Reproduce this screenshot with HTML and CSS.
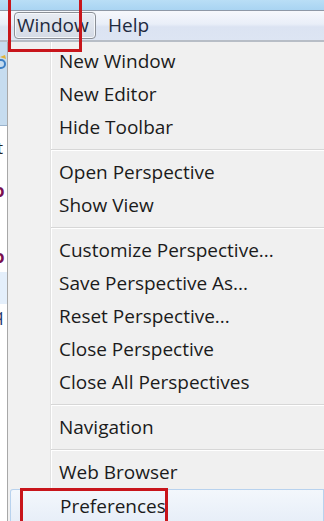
FILE: index.html
```html
<!DOCTYPE html>
<html>
<head>
    <title>Window menu</title>
    <meta name="viewport" content="width=device-width, initial-scale=1" />
    <link rel="stylesheet" href="styles.css">
</head>
<body>
    <div class="titlebar"></div>
    <div class="menubar">
        <div class="menubar-item active">Window</div>
        <div class="menubar-item">Help</div>
    </div>

    <div class="main">
        <div class="side">
            <div class="side-top">
                <svg class="side-icon" width="7" height="16" viewBox="0 0 7 16">
                    <path d="M0 3 L5 1 L6 5 Z" fill="#e0b43a" />
                    <circle cx="1" cy="10" r="4" fill="none" stroke="#3d7fc4" stroke-width="2" />
                </svg>
            </div>
            <div class="side-rest">
                <div class="frag frag-t">t</div>
                <div class="frag frag-p">o</div>
                <div class="frag frag-p2">o</div>
                <div class="frag-sel"></div>
                <div class="frag frag-q">q</div>
            </div>
        </div>

        <div class="menu">
            <div class="item">New Window</div>
            <div class="item">New Editor</div>
            <div class="item">Hide Toolbar</div>
            <div class="sep"></div>
            <div class="item">Open Perspective</div>
            <div class="item">Show View</div>
            <div class="sep"></div>
            <div class="item">Customize Perspective...</div>
            <div class="item">Save Perspective As...</div>
            <div class="item">Reset Perspective...</div>
            <div class="item">Close Perspective</div>
            <div class="item">Close All Perspectives</div>
            <div class="sep"></div>
            <div class="item">Navigation</div>
            <div class="sep"></div>
            <div class="item">Web Browser</div>
            <div class="item hover">Preferences</div>
        </div>
    </div>

    <!-- red marks drawn over the screenshot -->
    <div class="mark mark-window"></div>
    <div class="mark mark-pref"></div>
</body>
</html>
```

FILE: styles.css
```css
body {
    margin: 0;
    width: 324px;
    height: 521px;
    overflow: hidden;
    font-family: "Open Sans", "Noto Sans", sans-serif;
    font-size: 19px;
    color: #1b1b1b;
    background-color: #f0f0f0;
    position: relative;
}

.titlebar {
    height: 10px;
    background: linear-gradient(#b9def6, #a9d4f2);
    border-bottom: 1px solid #8e98a6;
}

.menubar {
    height: 29px;
    display: flex;
    align-items: center;
    padding-left: 14px;
    gap: 10px;
    background: linear-gradient(#f6f8fc, #e9eef8 45%, #dbe3f2 55%, #dde5f3);
    border-bottom: 2px solid #b7bdc6;
}

.menubar-item {
    height: 25px;
    line-height: 25px;
    padding: 0 6px 0 2px;
    font-size: 19px;
    color: #1e2a3e;
}

.menubar-item.active {
    width: 72px;
    border: 1px solid #8b8f96;
    border-radius: 4px;
    background: linear-gradient(#e8ecf3, #d4dae5);
    box-shadow: inset 0 0 0 1px #f6f8fb;
}

.main {
    display: flex;
    height: 479px;
}

.side {
    width: 7px;
    border-right: 1px solid #a8a8a8;
    background-color: #fff;
    display: flex;
    flex-direction: column;
    overflow: hidden;
}

.side-top {
    height: 84px;
    background-color: #c6dcef;
    border-bottom: 1px solid #9ab3cc;
    padding-top: 12px;
    box-sizing: border-box;
}

.side-icon {
    display: block;
}

.side-rest {
    position: relative;
    flex: 1;
}

.frag {
    position: absolute;
    font-weight: bold;
    font-size: 17px;
    line-height: 17px;
}

.frag-t { top: 13px; left: -3px; color: #222; font-weight: normal; }
.frag-p { top: 56px; left: -6px; color: #7a0f4f; }
.frag-p2 { top: 122px; left: -6px; color: #7a0f4f; }
.frag-q { top: 180px; left: -7px; color: #1c3a6e; font-weight: normal; }

.frag-sel {
    position: absolute;
    top: 146px;
    left: 0;
    width: 7px;
    height: 32px;
    background-color: #e4effb;
}

.menu {
    flex: 1;
    padding-top: 3px;
    overflow: hidden;
    background: linear-gradient(90deg, #f1f1f1 0, #f1f1f1 42px, #e2e2e2 42px, #e2e2e2 43px, #fff 43px, #fff 44px, #f0f0f0 44px);
}

.item {
    height: 33px;
    line-height: 33px;
    padding-left: 51px;
    white-space: nowrap;
}

.item.hover {
    margin-left: 2px;
    padding-left: 49px;
    border: 1px solid #b8d2ee;
    border-bottom: none;
    border-radius: 3px 0 0 0;
    height: 32px;
    line-height: 32px;
    background: linear-gradient(#f3f7fc, #e7eef8);
}

.sep {
    height: 12px;
    margin-left: 43px;
    position: relative;
}

.sep::after {
    content: "";
    position: absolute;
    left: 0;
    right: 0;
    top: 5px;
    height: 1px;
    background-color: #d7d7d7;
    border-bottom: 1px solid #fff;
}

.mark {
    position: absolute;
    border: 3px solid #c8151b;
    box-sizing: border-box;
}

.mark-window {
    left: 8px;
    top: -3px;
    width: 74px;
    height: 55px;
}

.mark-pref {
    left: 20px;
    top: 488px;
    width: 148px;
    height: 36px;
}
```
